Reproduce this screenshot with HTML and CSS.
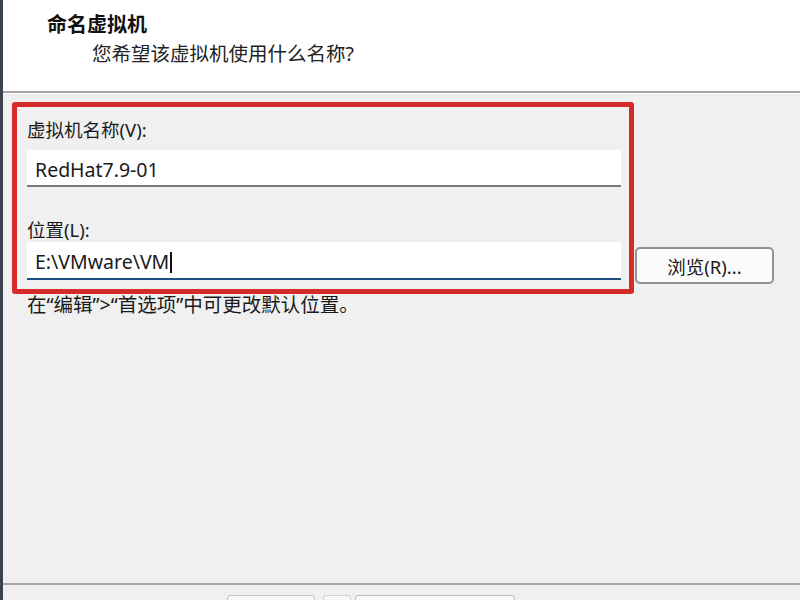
FILE: index.html
```html
<!DOCTYPE html>
<html lang="zh-CN">
<head>
<meta charset="utf-8">
<title>命名虚拟机</title>
<link rel="stylesheet" href="styles.css">
</head>
<body>
<div class="window">
  <header class="header">
    <h1 class="title">命名虚拟机</h1>
    <p class="subtitle">您希望该虚拟机使用什么名称?</p>
  </header>
  <main class="content">
    <div class="form-row">
      <div class="highlight">
        <div class="field-label">虚拟机名称(V):</div>
        <div class="input">RedHat7.9-01</div>
        <div class="field-label second">位置(L):</div>
        <div class="input focused">E:\VMware\VM<span class="caret"></span></div>
      </div>
      <button class="btn">浏览(R)...</button>
    </div>
    <p class="hint">在“编辑”&gt;“首选项”中可更改默认位置。</p>
  </main>
  <footer class="footer">
    <span class="fbtn fbtn-a"></span>
    <span class="fbtn fbtn-b"></span>
    <span class="fbtn fbtn-c"></span>
  </footer>
</div>
</body>
</html>
```

FILE: styles.css
```css
* { box-sizing: border-box; }
html, body {
  margin: 0;
  padding: 0;
  width: 800px;
  height: 600px;
  overflow: hidden;
  background: #f0f0f0;
}
body {
  font-family: "Noto Sans", "Noto Sans CJK SC", sans-serif;
  color: #1a1a1a;
}
.window {
  height: 600px;
  border-left: 3px solid #3c4350;
  display: flex;
  flex-direction: column;
}
.header {
  height: 93px;
  flex: none;
  background: #ffffff;
  border-bottom: 2px solid #a6a6a6;
  box-shadow: 0 1px 0 #ffffff;
  padding: 11px 0 0 44px;
}
.title {
  margin: 0;
  font-size: 20px;
  line-height: 28px;
  font-weight: bold;
  color: #111;
}
.subtitle {
  margin: 2px 0 0 45px;
  font-size: 19.5px;
  line-height: 26px;
  color: #222;
}
.content {
  flex: 1;
  padding: 9px 0 0 9px;
}
.form-row {
  display: flex;
  align-items: flex-end;
}
.highlight {
  width: 622px;
  height: 192px;
  border: 5px solid #d52b2b;
  border-radius: 3px;
  padding: 10px 8px 0 10px;
}
.field-label {
  font-size: 18.5px;
  line-height: 26px;
  height: 33px;
  color: #1a1a1a;
}
.field-label.second {
  margin-top: 30px;
  height: 25px;
}
.input {
  height: 37px;
  background: #ffffff;
  border-bottom: 2px solid #7a7a7a;
  padding: 4px 0 0 8px;
  font-size: 19.5px;
  line-height: 26px;
  color: #1a1a1a;
  display: flex;
  align-items: center;
}
.input.focused {
  border-bottom-color: #1d4f85;
  height: 38px;
}
.caret {
  display: inline-block;
  width: 2px;
  height: 21px;
  background: #111;
  margin-left: 1px;
}
.btn {
  margin: 0 0 10px 1px;
  width: 139px;
  height: 37px;
  border: 2px solid #8d959b;
  border-radius: 5px;
  background: #fbfbfb;
  font-family: "Noto Sans", "Noto Sans CJK SC", sans-serif;
  font-size: 18.5px;
  color: #1a1a1a;
  padding: 0;
}
.hint {
  margin: -2px 0 0 15px;
  font-size: 19.5px;
  line-height: 26px;
  color: #1a1a1a;
}
.footer {
  height: 17px;
  flex: none;
  border-top: 2px solid #a6a6a6;
  position: relative;
  background: #f0f0f0;
}
.fbtn {
  position: absolute;
  top: 10px;
  height: 20px;
  border: 1px solid #c4c4c4;
  border-radius: 3px;
  background: #f7f7f7;
}
.fbtn-a { left: 224px; width: 88px; }
.fbtn-b { left: 320px; width: 28px; border-color: #d0d0d0; }
.fbtn-c { left: 352px; width: 160px; border-color: #bdbdbd; }
```
